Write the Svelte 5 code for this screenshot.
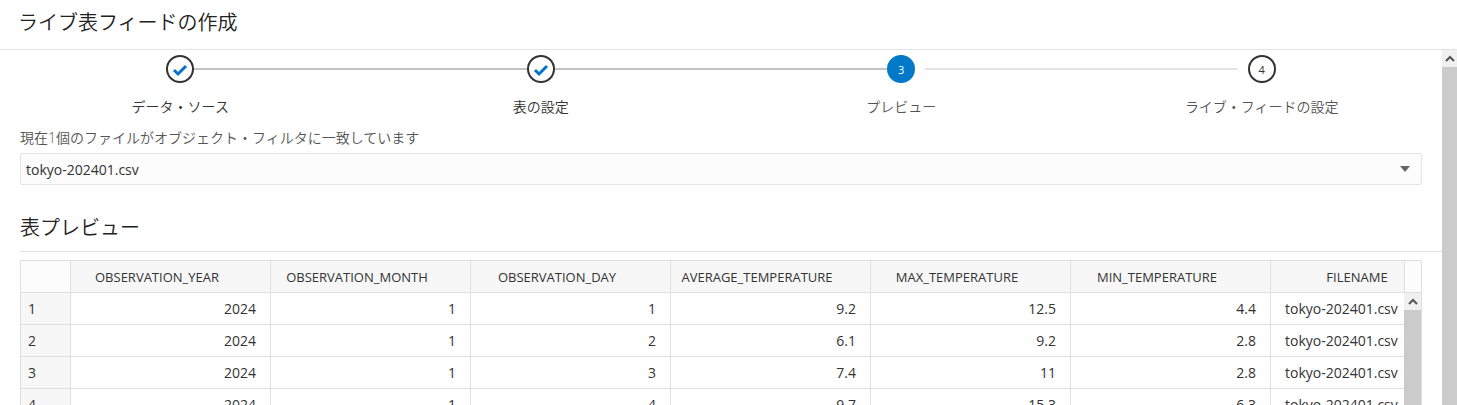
<script>
  const steps = [
    { label: 'データ・ソース', state: 'done' },
    { label: '表の設定', state: 'done' },
    { label: 'プレビュー', state: 'current' },
    { label: 'ライブ・フィードの設定', state: 'next' },
  ];

  const columns = [
    'OBSERVATION_YEAR',
    'OBSERVATION_MONTH',
    'OBSERVATION_DAY',
    'AVERAGE_TEMPERATURE',
    'MAX_TEMPERATURE',
    'MIN_TEMPERATURE',
    'FILENAME',
  ];

  const files = ['tokyo-202401.csv'];
  let file = $state(files[0]);

  const rows = [
    [2024, 1, 1, 9.2, 12.5, 4.4],
    [2024, 1, 2, 6.1, 9.2, 2.8],
    [2024, 1, 3, 7.4, 11, 2.8],
    [2024, 1, 4, 9.7, 15.3, 6.3],
  ];
</script>

{#snippet scrollbar(name)}
  <div class="scrollbar">
    <button type="button" class="scroll-up" aria-label={name}>
      <svg width="10" height="7" viewBox="0 0 10 7">
        <path d="M1 6 L5 2 L9 6" fill="none" stroke="#555" stroke-width="2" />
      </svg>
    </button>
    <div class="thumb"></div>
  </div>
{/snippet}

<div class="wizard">
  <header>
    <h1>ライブ表フィードの作成</h1>
  </header>
  <div class="body">
    <main>
      <ol class="train">
        {#each steps as step, i}
          <li class={step.state}>
            <div class="track">
              <span class="line"></span>
              <span class="dot">
                {#if step.state === 'done'}
                  <svg width="16" height="14" viewBox="0 0 16 14">
                    <path
                      d="M2 7 L6 11 L14 3"
                      fill="none"
                      stroke="#0572ce"
                      stroke-width="3"
                    />
                  </svg>
                {:else}
                  {i + 1}
                {/if}
              </span>
              <span class="line"></span>
            </div>
            <span class="step-label">{step.label}</span>
          </li>
        {/each}
      </ol>

      <div class="field">
        <label for="file"
          >現在1個のファイルがオブジェクト・フィルタに一致しています</label
        >
        <div class="select">
          <select id="file" bind:value={file}>
            {#each files as name}
              <option>{name}</option>
            {/each}
          </select>
          <svg class="caret" width="10" height="6" viewBox="0 0 10 6">
            <path d="M0 0 H10 L5 6 Z" fill="#666" />
          </svg>
        </div>
      </div>

      <h2>表プレビュー</h2>

      <div class="grid">
        <div class="grid-view">
          <table>
            <thead>
              <tr>
                <td class="corner"></td>
                {#each columns as column}
                  <th scope="col">{column}</th>
                {/each}
              </tr>
            </thead>
            <tbody>
              {#each rows as row, i}
                <tr>
                  <th scope="row">{i + 1}</th>
                  {#each row as value}
                    <td>{value}</td>
                  {/each}
                  <td class="text">{file}</td>
                </tr>
              {/each}
            </tbody>
          </table>
        </div>
        <div class="grid-side">
          <div class="filler"></div>
          {@render scrollbar('表を上にスクロール')}
        </div>
      </div>
    </main>
    {@render scrollbar('上にスクロール')}
  </div>
</div>

<style>
  :global(body) {
    margin: 0;
    background: #fff;
  }

  .wizard {
    display: flex;
    flex-direction: column;
    height: 100vh;
    overflow: hidden;
    color: #333;
    font-family: 'Open Sans', 'Noto Sans CJK JP', sans-serif;
    font-size: 14px;
    line-height: 20px;
  }

  header {
    padding: 9px 18px 12px;
    border-bottom: 1px solid #e4e4e4;
  }

  h1,
  h2 {
    margin: 0;
    font-size: 20px;
    line-height: 28px;
    font-weight: 350;
    color: #222;
  }

  .body {
    flex: 1;
    min-height: 0;
    display: flex;
  }

  main {
    flex: 1;
    min-width: 0;
    overflow: hidden;
    padding-top: 5px;
  }

  .train {
    display: flex;
    margin: 0;
    padding: 0;
    list-style: none;
  }

  .train li {
    flex: 1;
    text-align: center;
  }

  .track {
    display: grid;
    grid-template-columns: 1fr 28px 1fr;
    align-items: center;
    margin-bottom: 14px;
  }

  .line {
    height: 2px;
    background: #c4c4c4;
  }

  .current .line:last-child {
    margin-left: 10px;
    background: #e4e4e4;
  }

  .next .line {
    margin-right: 10px;
    background: #e4e4e4;
  }

  li:first-child .line:first-child,
  li:last-child .line:last-child {
    margin: 0;
    background: none;
  }

  .dot {
    box-sizing: border-box;
    display: flex;
    align-items: center;
    justify-content: center;
    height: 28px;
    padding-top: 1px;
    border: 2px solid #333;
    border-radius: 50%;
    font-size: 11px;
  }

  .current .dot {
    border-color: #0079c8;
    background: #0079c8;
    color: #fff;
  }

  .step-label,
  label {
    font-weight: 350;
  }

  .current .step-label,
  .next .step-label,
  label {
    color: #555;
  }

  .field {
    padding: 11px 20px 0;
  }

  label {
    display: block;
    margin-bottom: 5px;
  }

  .select {
    position: relative;
  }

  select {
    appearance: none;
    display: block;
    box-sizing: border-box;
    width: 100%;
    height: 32px;
    padding: 2px 30px 0 5px;
    border: 1px solid #e4e4e4;
    border-radius: 2px;
    background: #fcfcfc;
    color: #333;
    font: inherit;
  }

  .caret {
    position: absolute;
    top: 13px;
    right: 12px;
    pointer-events: none;
  }

  h2 {
    margin: 29px 0 8px 20px;
    padding-bottom: 9px;
    border-bottom: 1px solid #e4e4e4;
  }

  .grid {
    display: flex;
    margin: 0 20px;
    border: 1px solid #dfdfdf;
  }

  .grid-view {
    flex: 1;
    min-width: 0;
    overflow: hidden;
  }

  table {
    width: 1450px;
    table-layout: fixed;
    border-collapse: separate;
    border-spacing: 0;
  }

  th,
  td {
    box-sizing: border-box;
    width: 200px;
    height: 32px;
    padding: 0 14px;
    border-right: 1px solid #dfdfdf;
    border-bottom: 1px solid #dfdfdf;
    font-weight: 400;
    text-align: right;
  }

  thead th {
    padding: 0 27px 0 0;
    background: #f7f7f7;
    font-size: 13px;
    text-align: center;
  }

  .corner {
    width: 50px;
    background: #fcfcfc;
  }

  tbody th {
    padding: 0 7px;
    background: #f7f7f7;
    text-align: left;
  }

  td.text {
    text-align: left;
  }

  .grid-side {
    display: flex;
    flex-direction: column;
    width: 17px;
  }

  .filler {
    box-sizing: border-box;
    height: 32px;
    border-left: 1px solid #dfdfdf;
    border-bottom: 1px solid #dfdfdf;
    background: #fcfcfc;
  }

  .scrollbar {
    display: flex;
    flex-direction: column;
    width: 15px;
    background: #f0f0f0;
  }

  .grid-side .scrollbar {
    flex: 1;
    width: 17px;
  }

  .scroll-up {
    display: flex;
    align-items: center;
    justify-content: center;
    height: 17px;
    padding: 0;
    border: 0;
    background: #f0f0f0;
  }

  .thumb {
    flex: 1;
    background: #cbcbcb;
  }
</style>
